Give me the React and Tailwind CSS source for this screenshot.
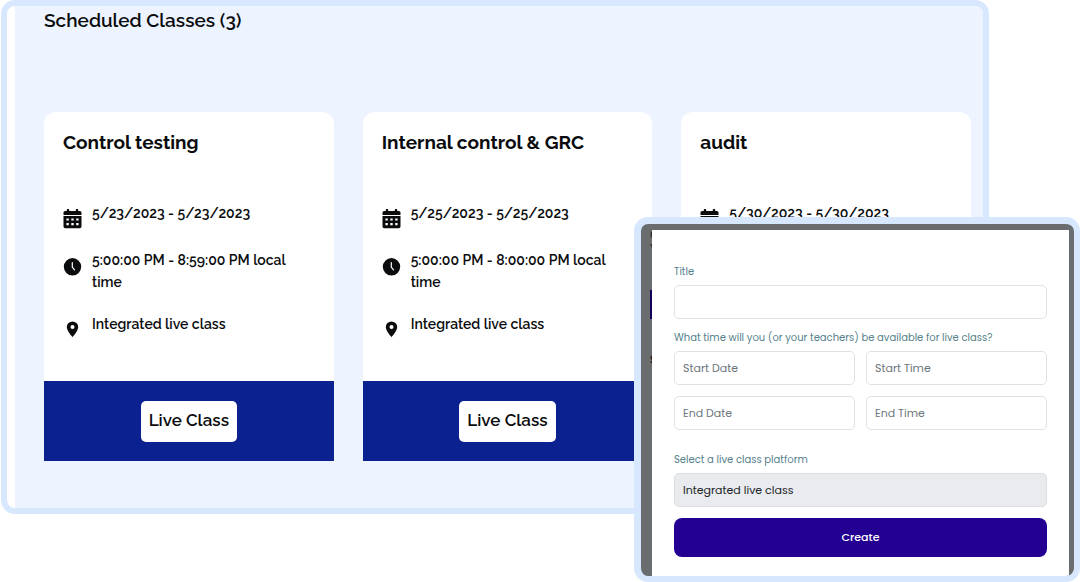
import React from 'react';

const classes = [
  { title: 'Control testing', dates: '5/23/2023 - 5/23/2023', time: '5:00:00 PM - 8:59:00 PM local time' },
  { title: 'Internal control & GRC', dates: '5/25/2023 - 5/25/2023', time: '5:00:00 PM - 8:00:00 PM local time' },
  { title: 'audit', dates: '5/30/2023 - 5/30/2023', time: '5:00:00 PM - 8:00:00 PM local time' },
];

const CalendarIcon = () => (
  <svg viewBox="0 0 18 20" className="w-full h-full" fill="currentColor" aria-hidden="true">
    <path d="M3.3 1a1.2 1.2 0 0 1 2.4 0v1h6.6V1a1.2 1.2 0 0 1 2.4 0v1h1.7A1.6 1.6 0 0 1 18 3.6V6H0V3.6A1.6 1.6 0 0 1 1.6 2h1.7z" />
    <path
      fillRule="evenodd"
      d="M0 7h18v10.4a1.8 1.8 0 0 1-1.8 1.8H1.8A1.8 1.8 0 0 1 0 17.4zM2.9 9.4v2.2h2.4V9.4zM7.8 9.4v2.2h2.4V9.4zM12.7 9.4v2.2h2.4V9.4zM2.9 14v2.2h2.4V14zM7.8 14v2.2h2.4V14zM12.7 14v2.2h2.4V14z"
    />
  </svg>
);

const ClockIcon = () => (
  <svg viewBox="0 0 18 20" className="w-full h-full" aria-hidden="true">
    <circle cx="9" cy="10.8" r="8.7" fill="currentColor" />
    <path d="M8.8 6.6v4.6l2.2 2.6" fill="none" stroke="white" strokeWidth="1.2" strokeLinecap="round" strokeLinejoin="round" />
  </svg>
);

const PinIcon = () => (
  <svg viewBox="0 0 18 20" className="w-full h-full" fill="currentColor" aria-hidden="true">
    <path
      fillRule="evenodd"
      d="M9 1.4a5.7 5.7 0 0 0-5.7 5.7c0 4 5.7 10.1 5.7 10.1s5.7-6.1 5.7-10.1A5.7 5.7 0 0 0 9 1.4zm0 3.7a2 2 0 1 1 0 4 2 2 0 0 1 0-4z"
    />
  </svg>
);

const InfoRow = ({ icon: Icon, children }) => (
  <li className="flex items-start gap-[10px]">
    <span className="w-[19px] h-5 mt-[7px] shrink-0">
      <Icon />
    </span>
    <span>{children}</span>
  </li>
);

const ClassCard = ({ item }) => (
  <article className="flex flex-col bg-white rounded-t-xl">
    <div className="px-[19px] pt-4 pb-[41px]">
      <h2 className="text-[19px] leading-7 font-bold">{item.title}</h2>
      <ul className="mt-[46px] flex flex-col gap-5 text-sm leading-[22px] font-semibold">
        <InfoRow icon={CalendarIcon}>{item.dates}</InfoRow>
        <InfoRow icon={ClockIcon}>{item.time}</InfoRow>
        <InfoRow icon={PinIcon}>Integrated live class</InfoRow>
      </ul>
    </div>
    <div className="mt-auto h-20 bg-[#0a218f] flex items-center justify-center">
      <button type="button" className="h-[41px] px-2 bg-white rounded-[5px] text-[17px] font-semibold">
        Live Class
      </button>
    </div>
  </article>
);

const inputClass =
  'w-full h-[34px] px-2 rounded-[5px] border border-[#dee2e6] bg-white text-[11px] text-[#212529] placeholder:text-[#6c757d] placeholder:opacity-100';

const labelClass = 'block text-[10px] leading-4 text-[#557f8a]';

const CreateDialog = () => (
  <div className="absolute right-0 top-[217px] w-[446px] rounded-[14px] border-[6px] border-t-[7px] border-l-[7px] border-[#d7e8fe] bg-[#6a6d70] font-['Poppins','Inter',sans-serif]">
    <div className="flex rounded-lg overflow-hidden pr-[5px]">
      <div aria-hidden="true" className="w-[11px] shrink-0 overflow-hidden pl-[9px] pt-1 text-xs leading-[14px] text-[#1c1f24]">
        <div>G</div>
        <div>Y</div>
        <div className="mt-[34px] h-[29px] w-8 bg-[#12005a]" />
        <div className="mt-[34px] font-bold">S</div>
      </div>
      <form onSubmit={(e) => e.preventDefault()} className="flex-1 min-w-0 mt-[6px] bg-white px-[22px] pt-[34px] pb-[19px]">
        <label htmlFor="title" className={labelClass}>Title</label>
        <input id="title" type="text" className={`${inputClass} mt-[5px]`} />

        <fieldset className="mt-[11px]">
          <legend className={labelClass}>What time will you (or your teachers) be available for live class?</legend>
          <div className="mt-[5px] grid grid-cols-2 gap-[11px]">
            <input type="text" aria-label="Start Date" placeholder="Start Date" className={inputClass} />
            <input type="text" aria-label="Start Time" placeholder="Start Time" className={inputClass} />
            <input type="text" aria-label="End Date" placeholder="End Date" className={inputClass} />
            <input type="text" aria-label="End Time" placeholder="End Time" className={inputClass} />
          </div>
        </fieldset>

        <label htmlFor="platform" className={`${labelClass} mt-[22px]`}>Select a live class platform</label>
        <select
          id="platform"
          className="mt-[5px] w-full h-[34px] px-2 appearance-none rounded-[5px] border border-[#dcdfe2] bg-[#e9ebee] text-[11px] text-[#212529]"
        >
          <option>Integrated live class</option>
        </select>

        <button type="submit" className="mt-[11px] w-full h-[39px] rounded-lg bg-[#230091] text-white text-[11px] font-medium">
          Create
        </button>
      </form>
    </div>
  </div>
);

export default function App() {
  return (
    <div className="relative min-h-screen bg-white text-[#0b0c0e] font-['Raleway','Lato',sans-serif]">
      <main className="ml-px mr-[91px] rounded-[14px] border-[6px] border-[#d7e8fe] bg-white pl-2">
        <div className="rounded-r-lg bg-[#edf4ff] pl-[29px] pr-3 pb-[47px]">
          <h1 className="text-[19px] leading-7 font-semibold">Scheduled Classes (3)</h1>
          <div className="mt-[78px] grid grid-cols-3 gap-[29px]">
            {classes.map((item) => (
              <ClassCard key={item.title} item={item} />
            ))}
          </div>
        </div>
      </main>
      <CreateDialog />
    </div>
  );
}
